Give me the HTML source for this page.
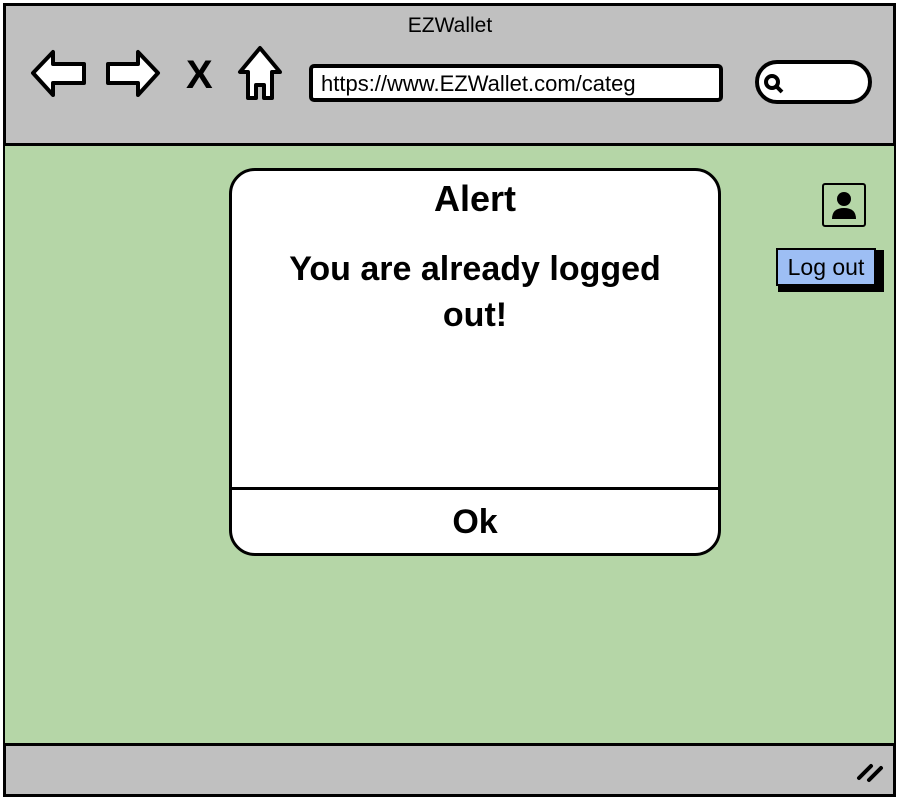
<!DOCTYPE html>
<html><head><style>
*{margin:0;padding:0;box-sizing:border-box}
body{width:900px;height:800px;background:#fff;font-family:"Liberation Sans",sans-serif;position:relative;overflow:hidden}
.abs{position:absolute}
</style></head><body>
<div class="abs" style="left:3px;top:3px;width:893px;height:794px;border:3px solid #000;background:#c0c0c0"></div>
<div class="abs" style="left:5px;top:143px;width:889px;height:603px;background:#b5d6a7;border-top:3px solid #000;border-bottom:3px solid #000"></div>
<div class="abs" style="left:0;top:14px;width:900px;text-align:center;font-size:21px">EZWallet</div>
<svg class="abs" style="left:0;top:40px" width="300" height="70">
<path d="M33,33 L53,12 L53,24 L84,24 L84,43 L53,43 L53,55 Z" fill="#fff" stroke="#000" stroke-width="4" stroke-linejoin="round"/>
<path d="M158,33 L138,12 L138,24 L108,24 L108,43 L138,43 L138,55 Z" fill="#fff" stroke="#000" stroke-width="4" stroke-linejoin="round"/>
<text x="186" y="48" font-size="40" font-weight="bold" font-family="Liberation Sans">X</text>
<path d="M260,8 L240,32 L248,32 L248,58 L256,58 L256,45 L264,45 L264,58 L272,58 L272,32 L280,32 Z" fill="#fff" stroke="#000" stroke-width="4" stroke-linejoin="round"/>
</svg>
<div class="abs" style="left:309px;top:64px;width:414px;height:38px;border:4px solid #000;border-radius:5px;background:#fff;font-size:22px;padding:3px 0 0 8px">https://www.EZWallet.com/categ</div>
<div class="abs" style="left:755px;top:60px;width:117px;height:44px;border:4px solid #000;border-radius:22px;background:#fff"></div>
<svg class="abs" style="left:760px;top:70px" width="30" height="30"><circle cx="12" cy="12" r="6" fill="none" stroke="#000" stroke-width="4"/><path d="M16,16 L22,22" stroke="#000" stroke-width="4"/></svg>
<div class="abs" style="left:229px;top:168px;width:492px;height:388px;border:3px solid #000;border-radius:26px;background:#fff"></div>
<div class="abs" style="left:229px;top:487px;width:492px;height:3px;background:#000"></div>
<div class="abs" style="left:229px;top:178px;width:492px;text-align:center;font-size:36px;font-weight:bold">Alert</div>
<div class="abs" style="left:255px;top:246px;width:440px;text-align:center;font-size:34px;font-weight:bold;line-height:46px">You are already logged out!</div>
<div class="abs" style="left:229px;top:503px;width:492px;text-align:center;font-size:34px;font-weight:bold">Ok</div>
<div class="abs" style="left:822px;top:183px;width:44px;height:44px;border:2px solid #000;border-radius:3px"></div>
<svg class="abs" style="left:822px;top:183px" width="44" height="44"><circle cx="22" cy="16" r="7"/><path d="M10,36 Q10,25 22,25 Q34,25 34,36 Z"/></svg>
<div class="abs" style="left:778px;top:250px;width:106px;height:42px;background:#000"></div>
<div class="abs" style="left:776px;top:248px;width:100px;height:38px;background:#9dbef4;border:2px solid #000;font-size:23px;text-align:center;line-height:34px">Log out</div>
<svg class="abs" style="left:855px;top:760px" width="35" height="25"><path d="M4,18 L16,6 M14,20 L26,8" stroke="#000" stroke-width="4" stroke-linecap="round"/></svg>
</body></html>
